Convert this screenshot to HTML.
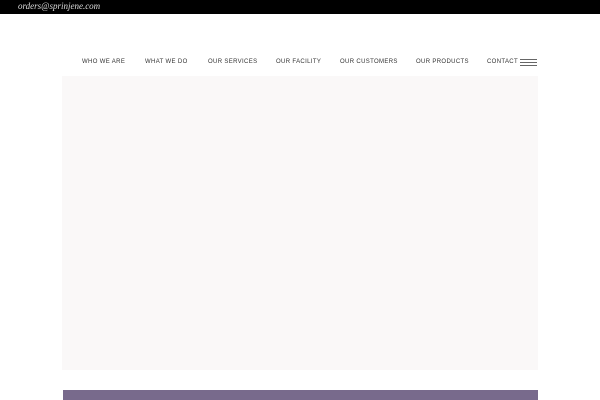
<!DOCTYPE html>
<html><head><style>
*{margin:0;padding:0;box-sizing:border-box}
body{width:600px;height:400px;background:#fff;position:relative;overflow:hidden;font-family:"Liberation Sans",sans-serif}
.top{position:absolute;left:0;top:0;width:600px;height:14px;background:#000}
.top span{position:absolute;left:18px;top:1px;font-family:"Liberation Serif",serif;font-style:italic;font-size:9px;color:#ddd}
.nav span{position:absolute;top:59px;font-size:6px;letter-spacing:0.35px;color:#333;white-space:nowrap}
.hero{position:absolute;left:62px;top:76px;width:476px;height:294px;background:#faf8f8}
.bar{position:absolute;left:63px;top:390px;width:475px;height:10px;background:#786a8c}
.ham{position:absolute;left:520px;top:59px;width:17px;height:7px;border-top:1px solid #666;border-bottom:1px solid #666}
.ham:after{content:"";position:absolute;left:0;top:2px;width:17px;height:1px;background:#666}
</style></head><body>
<div class="top"><span>orders@sprinjene.com</span></div>
<div class="nav">
<span style="left:82px">WHO WE ARE</span>
<span style="left:145px">WHAT WE DO</span>
<span style="left:208px">OUR SERVICES</span>
<span style="left:276px">OUR FACILITY</span>
<span style="left:340px">OUR CUSTOMERS</span>
<span style="left:416px">OUR PRODUCTS</span>
<span style="left:487px">CONTACT</span>
</div>
<div class="ham"></div>
<div class="hero"></div>
<div class="bar"></div>
</body></html>
